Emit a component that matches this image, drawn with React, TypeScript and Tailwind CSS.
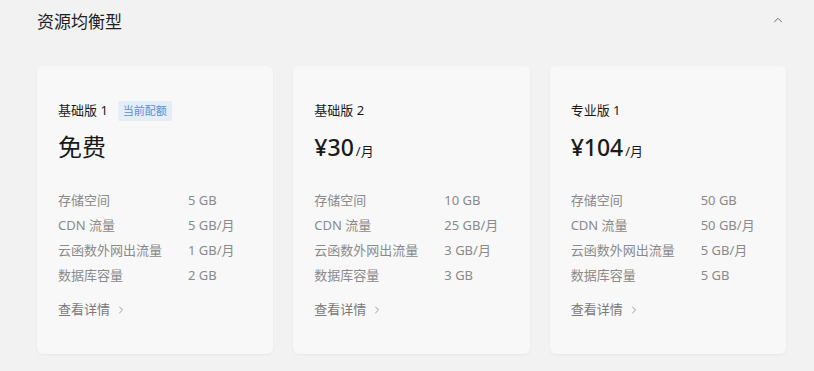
import React from "react";
import { ChevronRight, ChevronUp } from "lucide-react";

type Plan = {
  name: string;
  current?: boolean;
  price: React.ReactNode;
  rows: [string, string][];
};

const plans: Plan[] = [
  {
    name: "基础版 1",
    current: true,
    price: <span className="text-[24px] leading-[32px] text-[#1a1a1a]">免费</span>,
    rows: [
      ["存储空间", "5 GB"],
      ["CDN 流量", "5 GB/月"],
      ["云函数外网出流量", "1 GB/月"],
      ["数据库容量", "2 GB"],
    ],
  },
  {
    name: "基础版 2",
    price: (
      <span className="text-[#1a1a1a]">
        <span className="text-[23px] leading-[32px] font-medium">¥30</span>
        <span className="text-[13px] ml-[2px]">/月</span>
      </span>
    ),
    rows: [
      ["存储空间", "10 GB"],
      ["CDN 流量", "25 GB/月"],
      ["云函数外网出流量", "3 GB/月"],
      ["数据库容量", "3 GB"],
    ],
  },
  {
    name: "专业版 1",
    price: (
      <span className="text-[#1a1a1a]">
        <span className="text-[23px] leading-[32px] font-medium">¥104</span>
        <span className="text-[13px] ml-[2px]">/月</span>
      </span>
    ),
    rows: [
      ["存储空间", "50 GB"],
      ["CDN 流量", "50 GB/月"],
      ["云函数外网出流量", "5 GB/月"],
      ["数据库容量", "5 GB"],
    ],
  },
];

export default function App() {
  return (
    <div
      className="w-[814px] h-[371px] bg-[#f2f2f2] pl-[37px] pr-[28px] overflow-hidden"
      style={{ fontFamily: '"Noto Sans", "Noto Sans CJK SC", sans-serif' }}
    >
      <div className="h-[43px] flex items-center justify-between">
        <span className="text-[17px] text-[#1f1f1f] leading-none">资源均衡型</span>
        <ChevronUp size={14} strokeWidth={1.6} className="text-[#666] mr-[1px] -mt-[4px]" />
      </div>
      <div className="mt-[23px] grid grid-cols-3 gap-[20px]">
        {plans.map((p) => (
          <div
            key={p.name}
            className="bg-[#f8f8f8] rounded-[6px] shadow-[0_1px_3px_rgba(0,0,0,0.05)] pt-[35px] pb-[34px] px-[21px]"
          >
            <div className="h-[20px] flex items-center gap-[10px]">
              <span className="text-[13px] text-[#1a1a1a]">{p.name}</span>
              {p.current && (
                <span className="h-[20px] px-[5px] flex items-center bg-[#e5edf7] text-[#5b8ed8] text-[11px] rounded-[2px]">
                  当前配额
                </span>
              )}
            </div>
            <div className="mt-[10px] h-[32px] flex items-end">{p.price}</div>
            <div className="mt-[25px]">
              {p.rows.map(([k, v]) => (
                <div key={k} className="flex h-[25px] items-center text-[13px] text-[#8a8a8a]">
                  <span className="w-[130px] shrink-0">{k}</span>
                  <span>{v}</span>
                </div>
              ))}
            </div>
            <div className="mt-[12px] h-[20px] flex items-center text-[13px] text-[#7a7a7a]">
              <span>查看详情</span>
              <ChevronRight size={12} strokeWidth={1.6} className="ml-[5px] text-[#888]" />
            </div>
          </div>
        ))}
      </div>
    </div>
  );
}
